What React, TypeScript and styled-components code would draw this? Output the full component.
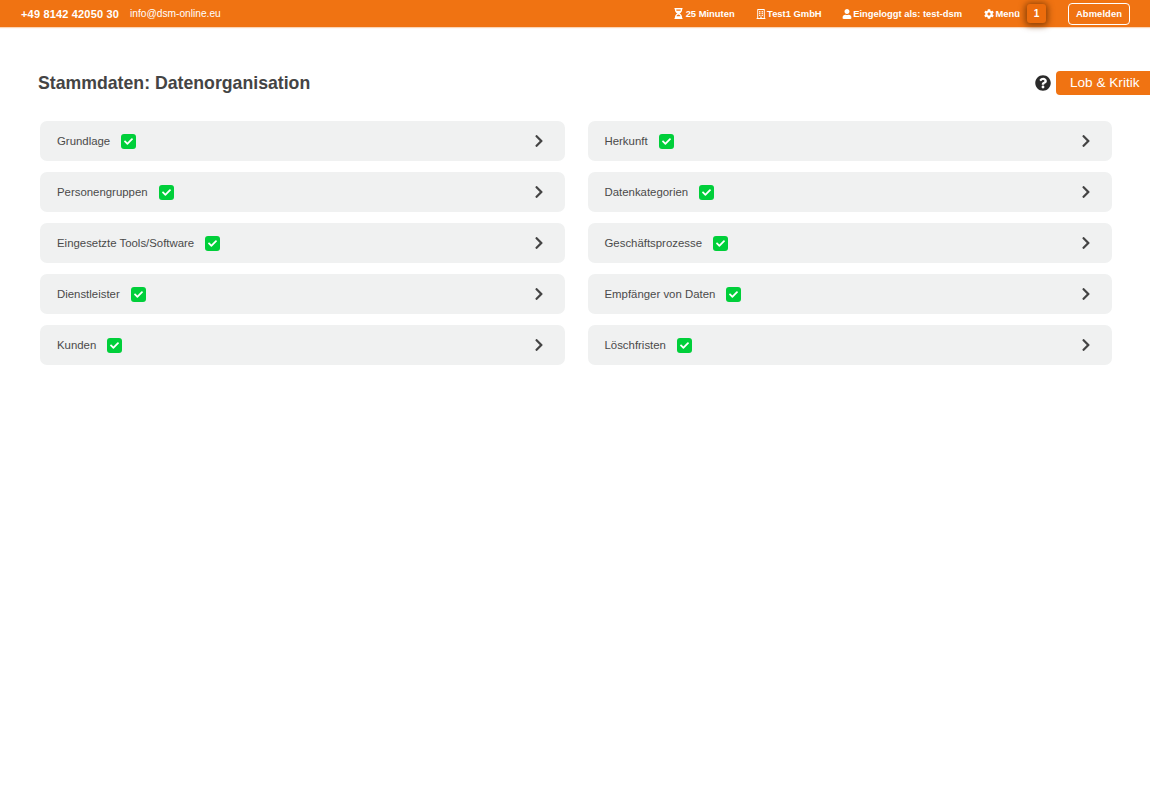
import { createGlobalStyle } from 'styled-components';
import styled from 'styled-components';
import { FaCheck, FaChevronRight, FaCog, FaHourglassHalf, FaQuestionCircle, FaRegBuilding, FaUser } from 'react-icons/fa';

const leftItems = ['Grundlage', 'Personengruppen', 'Eingesetzte Tools/Software', 'Dienstleister', 'Kunden'];
const rightItems = ['Herkunft', 'Datenkategorien', 'Geschäftsprozesse', 'Empfänger von Daten', 'Löschfristen'];

const Row = ({ label }: { label: string }) => (
  <Item>
    <ItemLabel>{label}</ItemLabel>
    <CheckBadge>
      <FaCheck size={9} />
    </CheckBadge>
    <Chevron>
      <FaChevronRight size={14} />
    </Chevron>
  </Item>
);

export default function App() {
  return (
    <>
      <GlobalStyle />
      <Header>
        <Contact>
          <Phone>+49 8142 42050 30</Phone>
          <Mail>info@dsm-online.eu</Mail>
        </Contact>
        <Nav>
          <NavItem $after={21}>
            <FaHourglassHalf size={11} />
            25 Minuten
          </NavItem>
          <NavItem $after={20}>
            <FaRegBuilding size={10} />
            Test1 GmbH
          </NavItem>
          <NavItem $after={22}>
            <FaUser size={10} />
            Eingeloggt als: test-dsm
          </NavItem>
          <NavItem $after={7}>
            <FaCog size={10} />
            Menü
          </NavItem>
          <Counter>1</Counter>
          <LogoutButton>Abmelden</LogoutButton>
        </Nav>
      </Header>
      <Main>
        <TitleBar>
          <Title>Stammdaten: Datenorganisation</Title>
          <Feedback>
            <HelpIcon>
              <FaQuestionCircle />
            </HelpIcon>
            <FeedbackButton>Lob &amp; Kritik</FeedbackButton>
          </Feedback>
        </TitleBar>
        <Columns>
          <Column>
            {leftItems.map(item => (
              <Row key={item} label={item} />
            ))}
          </Column>
          <Column>
            {rightItems.map(item => (
              <Row key={item} label={item} />
            ))}
          </Column>
        </Columns>
      </Main>
    </>
  );
}

const GlobalStyle = createGlobalStyle`
  html, body {
    margin: 0;
    padding: 0;
    background: #fff;
    font-family: "Liberation Sans", Arial, sans-serif;
  }
`;

const Header = styled.header`
  height: 27px;
  box-sizing: border-box;
  background: #f07312;
  color: #fff;
  display: flex;
  align-items: center;
  justify-content: space-between;
  padding: 0 20px 0 21px;
  box-shadow: 0 1px 1px rgba(240, 115, 18, 0.3);
`;

const Contact = styled.div`
  display: flex;
  align-items: center;
  gap: 11px;
`;

const Phone = styled.span`
  font-size: 11px;
  font-weight: 700;
  letter-spacing: 0.17px;
`;

const Mail = styled.span`
  font-size: 10.2px;
`;

const Nav = styled.nav`
  display: flex;
  align-items: center;
`;

const NavItem = styled.span<{ $after: number }>`
  display: flex;
  align-items: center;
  gap: 1.5px;
  font-size: 9.4px;
  font-weight: 700;
  margin-right: ${p => p.$after}px;
  white-space: nowrap;

  svg {
    width: auto;
  }
`;

const Counter = styled.span`
  width: 19px;
  height: 19px;
  border-radius: 3px;
  background: #ec6c0c;
  box-shadow: 0 1px 6px 2px rgba(110, 50, 0, 0.75);
  font-size: 10px;
  font-weight: 700;
  display: flex;
  align-items: center;
  justify-content: center;
  margin-right: 22px;
`;

const LogoutButton = styled.button`
  width: 62px;
  height: 22px;
  padding: 0;
  border: 1.5px solid #fff;
  border-radius: 4px;
  background: transparent;
  color: #fff;
  font-family: inherit;
  font-size: 9.4px;
  font-weight: 700;
  letter-spacing: 0.1px;
`;

const Main = styled.main`
  padding: 44px 38px 0 38px;
`;

const TitleBar = styled.div`
  display: flex;
  align-items: center;
  justify-content: space-between;
  height: 24px;
  margin-right: -38px;
  margin-bottom: 26px;
`;

const Title = styled.h1`
  margin: 0;
  font-size: 17.7px;
  font-weight: 700;
  color: #444;
`;

const Feedback = styled.div`
  display: flex;
  align-items: center;
  gap: 5px;
`;

const HelpIcon = styled.span`
  display: flex;
  font-size: 16px;
  color: #2b2b2b;
`;

const FeedbackButton = styled.span`
  width: 94px;
  height: 24px;
  box-sizing: border-box;
  padding-left: 14px;
  background: #f07312;
  color: #fff;
  border-radius: 4px 0 0 4px;
  font-size: 13.6px;
  line-height: 24px;
`;

const Columns = styled.div`
  display: grid;
  grid-template-columns: 525px 524.5px;
  column-gap: 22.5px;
  margin-left: 2px;
`;

const Column = styled.div`
  display: flex;
  flex-direction: column;
  gap: 11px;
`;

const Item = styled.div`
  height: 40px;
  box-sizing: border-box;
  display: flex;
  align-items: center;
  padding: 0 19px 0 17px;
  background: #f0f1f1;
  border-radius: 7px;
`;

const ItemLabel = styled.span`
  font-size: 11.4px;
  color: #4a4a4a;
`;

const CheckBadge = styled.span`
  width: 15px;
  height: 15px;
  display: flex;
  align-items: center;
  justify-content: center;
  margin-left: 11px;
  border-radius: 3px;
  background: #00cf3a;
  color: #fff;
`;

const Chevron = styled.span`
  display: flex;
  margin-left: auto;
  color: #444;
`;
